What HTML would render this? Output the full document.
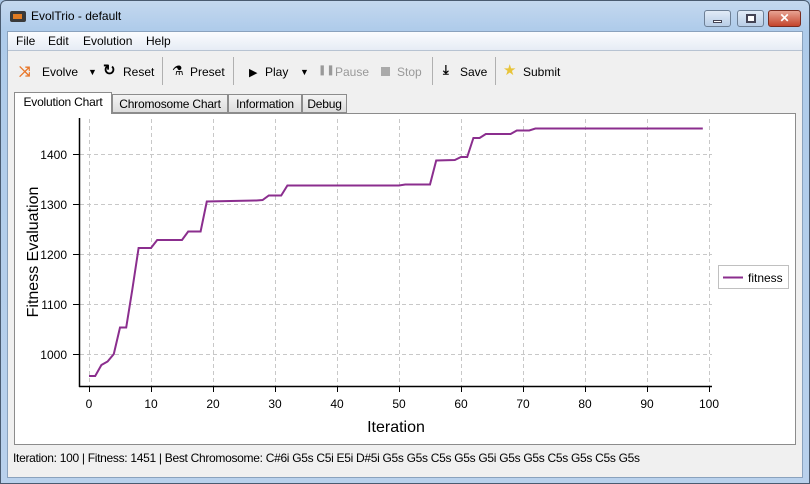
<!DOCTYPE html>
<html><head><meta charset="utf-8"><style>
*{margin:0;padding:0;box-sizing:border-box}
body{width:810px;height:484px;overflow:hidden;font-family:"Liberation Sans",sans-serif;font-size:12px;color:#000;background:#a9c5e4}
.win{position:absolute;left:0;top:0;width:810px;height:484px;border:1px solid #4a5b70;border-radius:6px 6px 0 0;background:linear-gradient(#c4d8ef,#aecbea 30px,#b9d1ec);}
.title{position:absolute;left:30px;top:8px;font-size:12px}
.inner{position:absolute;left:6px;top:30px;width:796px;height:447px;background:#f0f0f0;border:1px solid #8aa2bd}
.menu{position:absolute;left:0;top:0;width:100%;height:19px;background:linear-gradient(#fbfcfe,#e6ecf5);border-bottom:1px solid #b7c3d2}
.menu span{position:absolute;top:2px}
.tb span{position:absolute;top:33px}
.sep{position:absolute;top:25px;width:1px;height:28px;background:#b0b0b0}
.dis{color:#999}
.tab{position:absolute;top:62px;height:19px;border:1px solid #8c8c8c;background:linear-gradient(#f4f4f4,#dcdcdc);padding:2px 0 0;font-size:12px;text-align:center;white-space:nowrap;letter-spacing:-0.2px}
.panel{position:absolute;left:6px;top:81px;width:782px;height:332px;background:#fff;border:1px solid #8c8c8c}
.btn{position:absolute;top:9px;width:27px;height:17px;border:1px solid #6d7f95;border-radius:3px;background:linear-gradient(#e1ebf7,#b8cde6)}
</style></head><body>
<div class="win">
<div style="position:absolute;left:9px;top:10px;width:16px;height:11px;background:#3a3a3a;border-radius:2px"><div style="position:absolute;left:3px;top:3px;width:9px;height:5px;background:#e07b22"></div></div>
<div class="title">EvolTrio - default</div>
<div class="btn" style="left:703px"><div style="position:absolute;left:8px;top:9px;width:9px;height:3px;background:#fff;border:1px solid #445"></div></div>
<div class="btn" style="left:736px"><div style="position:absolute;left:8px;top:3px;width:10px;height:9px;border:2px solid #445;background:#fff"></div></div>
<div class="btn" style="left:767px;width:33px;background:linear-gradient(#e8a393,#c4452c);border-color:#7a2c20;color:#fff;text-align:center;font-weight:bold;font-size:12px;line-height:15px">✕</div>
<div class="inner">
<div class="menu"><span style="left:8px">File</span><span style="left:40px">Edit</span><span style="left:75px">Evolution</span><span style="left:138px">Help</span></div>
<div class="tb">
<span style="left:11px;color:#e8772a;font-weight:bold;top:31px;font-size:14px">⤨</span><span style="left:34px">Evolve</span>
<span style="left:80px;font-size:9px;top:35px">▼</span>
<span style="left:95px;font-weight:bold;font-size:15px;top:29px">↻</span><span style="left:115px">Reset</span>
<div class="sep" style="left:154px"></div>
<span style="left:164px;font-size:13px;top:31px">⚗</span><span style="left:182px">Preset</span>
<div class="sep" style="left:225px"></div>
<span style="left:241px;font-size:11px;top:34px">▶</span><span style="left:257px">Play</span>
<span style="left:292px;font-size:9px;top:35px">▼</span>
<span style="left:310px;top:33px;font-size:10px" class="dis">❚❚</span><span style="left:327px" class="dis">Pause</span>
<span style="left:373px;top:35px;width:9px;height:9px;background:#aaa"></span><span style="left:389px" class="dis">Stop</span>
<div class="sep" style="left:424px"></div>
<span style="left:435px;font-weight:bold;font-size:13px;top:30px">⤓</span><span style="left:452px">Save</span>
<div class="sep" style="left:487px"></div>
<span style="left:495px;color:#e8c43a;font-size:15px;top:29px">★</span><span style="left:515px">Submit</span>
</div>
<div class="tab" style="left:6px;top:60px;width:98px;height:22px;background:#fff;border-bottom:none;z-index:2">Evolution Chart</div>
<div class="tab" style="left:104px;width:116px">Chromosome Chart</div>
<div class="tab" style="left:220px;width:74px">Information</div>
<div class="tab" style="left:294px;width:45px">Debug</div>
<div class="panel"></div>
<div style="position:absolute;left:5px;top:419px;font-size:12px;letter-spacing:-0.3px">Iteration: 100 | Fitness: 1451 | Best Chromosome: C#6i G5s C5i E5i D#5i G5s G5s C5s G5s G5i G5s G5s C5s G5s C5s G5s</div>
</div>
</div>
<svg style="position:absolute;left:0;top:0" width="810" height="484" font-family="Liberation Sans" font-size="12">
<g stroke="#c8c8c8" stroke-dasharray="4,3" stroke-width="1">
<line x1="80" y1="154.5" x2="712" y2="154.5"/><line x1="80" y1="204.5" x2="712" y2="204.5"/><line x1="80" y1="254.5" x2="712" y2="254.5"/><line x1="80" y1="304.5" x2="712" y2="304.5"/><line x1="80" y1="354.5" x2="712" y2="354.5"/>
<line x1="89.5" y1="119" x2="89.5" y2="386"/><line x1="151.5" y1="119" x2="151.5" y2="386"/><line x1="213.5" y1="119" x2="213.5" y2="386"/><line x1="275.5" y1="119" x2="275.5" y2="386"/><line x1="337.5" y1="119" x2="337.5" y2="386"/><line x1="399.5" y1="119" x2="399.5" y2="386"/><line x1="461.5" y1="119" x2="461.5" y2="386"/><line x1="523.5" y1="119" x2="523.5" y2="386"/><line x1="585.5" y1="119" x2="585.5" y2="386"/><line x1="647.5" y1="119" x2="647.5" y2="386"/><line x1="709.5" y1="119" x2="709.5" y2="386"/>
</g>
<g stroke="#000" stroke-width="1.5">
<line x1="79.5" y1="118" x2="79.5" y2="387"/><line x1="79" y1="386.5" x2="712" y2="386.5"/>
</g>
<g stroke="#000"><line x1="73" y1="154.5" x2="79" y2="154.5"/><line x1="73" y1="204.5" x2="79" y2="204.5"/><line x1="73" y1="254.5" x2="79" y2="254.5"/><line x1="73" y1="304.5" x2="79" y2="304.5"/><line x1="73" y1="354.5" x2="79" y2="354.5"/>
<line x1="89.5" y1="387" x2="89.5" y2="392"/><line x1="151.5" y1="387" x2="151.5" y2="392"/><line x1="213.5" y1="387" x2="213.5" y2="392"/><line x1="275.5" y1="387" x2="275.5" y2="392"/><line x1="337.5" y1="387" x2="337.5" y2="392"/><line x1="399.5" y1="387" x2="399.5" y2="392"/><line x1="461.5" y1="387" x2="461.5" y2="392"/><line x1="523.5" y1="387" x2="523.5" y2="392"/><line x1="585.5" y1="387" x2="585.5" y2="392"/><line x1="647.5" y1="387" x2="647.5" y2="392"/><line x1="709.5" y1="387" x2="709.5" y2="392"/></g>
<g text-anchor="end"><text x="67" y="159">1400</text><text x="67" y="209">1300</text><text x="67" y="259">1200</text><text x="67" y="309">1100</text><text x="67" y="359">1000</text></g>
<g text-anchor="middle"><text x="89" y="408">0</text><text x="151" y="408">10</text><text x="213" y="408">20</text><text x="275" y="408">30</text><text x="337" y="408">40</text><text x="399" y="408">50</text><text x="461" y="408">60</text><text x="523" y="408">70</text><text x="585" y="408">80</text><text x="647" y="408">90</text><text x="709" y="408">100</text>
<text x="396" y="432" font-size="16">Iteration</text>
<text transform="translate(38,252) rotate(-90)" font-size="16">Fitness Evaluation</text></g>
<polyline fill="none" stroke="#8b2e8e" stroke-width="2" points="89,376 95.2,376 101.4,365 107.6,361.5 113.8,354 120,327.5 126.2,327.5 132.4,289 138.6,248 151,248 157.2,240 182,240 188.2,231.5 200.6,231.5 206.8,201.5 256.4,200.5 262.6,200 268.8,195.5 281.2,195.5 287.4,185.5 399,185.5 405.2,184.5 430,184.5 436.2,160.5 454.8,160 461,157 467.2,157 473.4,138 479.6,138 485.8,134 510.6,134 516.8,130.5 529.2,130.5 535.4,128.5 702.8,128.5"/>
<rect x="718.5" y="265.5" width="70" height="23" fill="#fff" stroke="#c0c0c0"/>
<line x1="723" y1="277.5" x2="743" y2="277.5" stroke="#8b2e8e" stroke-width="2"/>
<text x="748" y="282">fitness</text>
</svg>
</body></html>
